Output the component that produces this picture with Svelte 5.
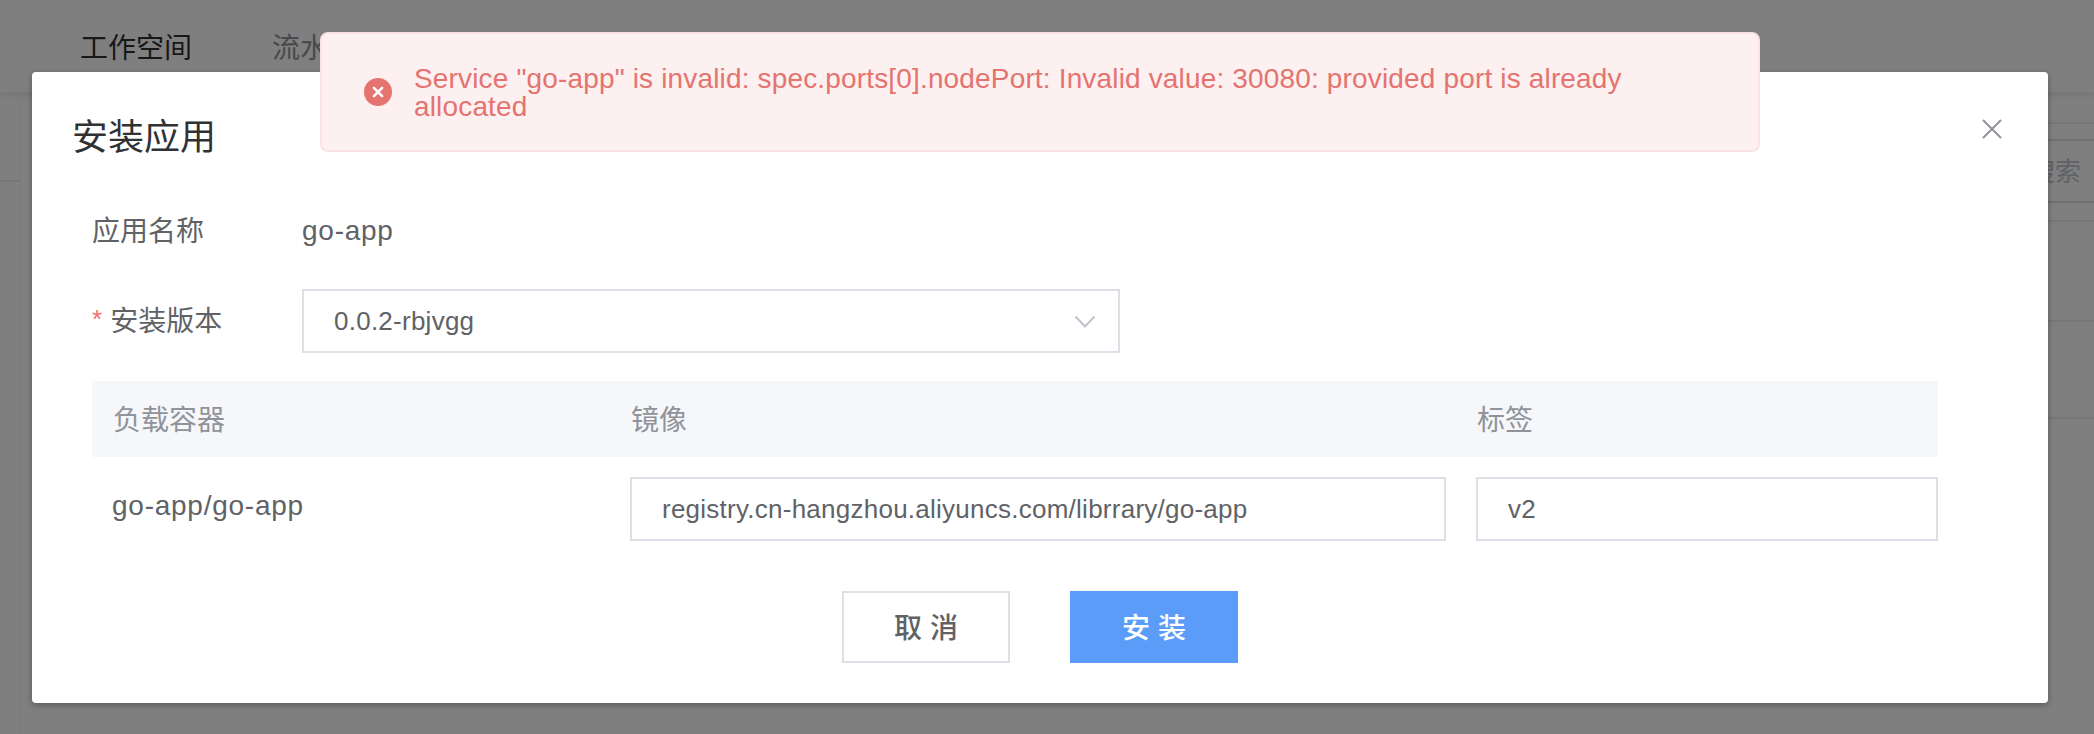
<script>
  const columns = ['负载容器', '镜像', '标签'];
  const rows = [
    { workload: 'go-app/go-app', image: 'registry.cn-hangzhou.aliyuncs.com/librrary/go-app', tag: 'v2' }
  ];
</script>

<div class="screen">
  <div class="page">
    <header class="nav">
      <span class="tab active">工作空间</span>
      <span class="tab">流水</span>
    </header>
    <div class="body">
      <aside class="side"><div class="side-head"></div></aside>
      <main class="main">
        <div class="gap-line"></div>
        <div class="toolbar"><div class="search">搜索</div></div>
        <div class="row first"></div>
        <div class="row second"></div>
      </main>
    </div>
  </div>

  <div class="overlay">
    <section class="dialog">
      <div class="head">
        <h1>安装应用</h1>
        <svg class="close" width="22" height="22" viewBox="0 0 22 22"><path d="M2 2L20 20M20 2L2 20" /></svg>
      </div>
      <div class="form-row name">
        <span class="label">应用名称</span>
        <span class="value">go-app</span>
      </div>
      <div class="form-row version">
        <span class="label"><i>*</i>安装版本</span>
        <div class="field select">
          <span>0.0.2-rbjvgg</span>
          <svg width="22" height="14" viewBox="0 0 22 14"><path d="M1.5 1.5L11 11.5L20.5 1.5" /></svg>
        </div>
      </div>
      <div class="grid thead">
        {#each columns as c}<span>{c}</span>{/each}
      </div>
      {#each rows as r}
        <div class="grid trow">
          <span class="workload">{r.workload}</span>
          <div class="field image"><span>{r.image}</span></div>
          <div class="field"><span>{r.tag}</span></div>
        </div>
      {/each}
      <div class="actions">
        <button>取 消</button>
        <button class="primary">安 装</button>
      </div>
    </section>
  </div>

  <div class="toast">
    <svg width="28" height="28" viewBox="0 0 28 28">
      <circle cx="14" cy="14" r="14" />
      <path d="M9.9 9.9L18.1 18.1M18.1 9.9L9.9 18.1" />
    </svg>
    <p>Service "go-app" is invalid: spec.ports[0].nodePort: Invalid value: 30080: provided port is already<br />allocated</p>
  </div>
</div>

<style>
  :global(body) { margin: 0; }
  .screen, .screen * { box-sizing: border-box; }
  .screen {
    position: relative;
    width: 2094px;
    height: 734px;
    overflow: hidden;
    background: #fff;
    color: #606266;
    font-family: "Liberation Sans", "Noto Sans CJK SC", sans-serif;
    font-size: 28px;
  }
  .page { height: 734px; display: flex; flex-direction: column; }
  .nav {
    height: 92px;
    padding: 0 80px;
    display: flex;
    gap: 80px;
    line-height: 97px;
    box-shadow: 0 2px 8px rgba(0, 0, 0, .12);
  }
  .tab { color: #909399; }
  .tab.active { color: #303133; }
  .body { flex: 1; display: flex; }
  .side { width: 21px; border-right: 1px solid #f8f8fa; }
  .side-head { height: 90px; border-bottom: 2px solid #ebeef5; }
  .main { flex: 1; margin-left: 40px; }
  .gap-line { height: 32px; border-bottom: 2px solid #ebeef5; }
  .toolbar { height: 98px; padding-top: 15px; border-bottom: 2px solid #ebeef5; }
  .search {
    height: 64px;
    padding-right: 13px;
    border: solid #dcdfe6;
    border-width: 2px 0;
    line-height: 62px;
    text-align: right;
    font-size: 26px;
    color: #c0c4cc;
  }
  .row { border-bottom: 2px solid #ebeef5; }
  .first { height: 100px; }
  .second { height: 97px; }

  .overlay {
    position: absolute;
    inset: 0;
    padding: 72px 46px 31px 32px;
    background: rgba(0, 0, 0, .5);
  }
  .dialog {
    height: 631px;
    padding: 40px 110px 0 60px;
    background: #fff;
    border-radius: 4px;
    box-shadow: 0 2px 6px rgba(0, 0, 0, .3);
  }
  .head {
    height: 48px;
    margin: 0 -65px 0 -20px;
    display: flex;
    justify-content: space-between;
  }
  h1 { margin: 0; font-size: 36px; line-height: 51px; font-weight: 400; color: #303133; }
  .close { margin: 6px 0 0; fill: none; stroke: #909399; stroke-width: 2; }
  .form-row { display: flex; align-items: center; height: 64px; }
  .name { margin-top: 38px; padding-top: 2px; }
  .version { margin-top: 27px; }
  .label { width: 210px; line-height: 40px; padding-top: 1px; }
  .label i { font-style: normal; color: #f56c6c; margin-right: 8px; font-size: 26px; line-height: 0; vertical-align: 3px; }
  .value, .workload { letter-spacing: .75px; }
  .field {
    height: 64px;
    padding: 0 30px;
    border: 2px solid #dcdfe6;
    display: flex;
    align-items: center;
    font-size: 26px;
    letter-spacing: .25px;
    background: #fff;
  }
  .select { width: 818px; justify-content: space-between; padding-right: 22px; }
  .select svg { fill: none; stroke: #c0c4cc; stroke-width: 2; position: relative; top: 1px; }
  .grid { display: grid; grid-template-columns: 518px 846px 462px; padding-left: 20px; }
  .image { width: 816px; }
  .thead {
    height: 76px;
    margin-top: 28px;
    padding-left: 21px;
    padding-bottom: 2px;
    align-items: center;
    background: #f5f7fa;
    color: #909399;
  }
  .trow { margin-top: 20px; height: 64px; }
  .workload { line-height: 58px; }
  .actions { display: flex; gap: 60px; margin: 50px 0 0 750px; }
  button {
    width: 168px;
    height: 72px;
    padding: 0 0 2px;
    border: 2px solid #dcdfe6;
    background: #fff;
    color: #606266;
    font: 500 28px "Liberation Sans", "Noto Sans CJK SC", sans-serif;
  }
  .primary { border-color: #5a9cf8; background: #5a9cf8; color: #fff; }

  .toast {
    position: absolute;
    left: 320px;
    top: 32px;
    width: 1440px;
    height: 120px;
    padding: 0 42px;
    display: flex;
    align-items: center;
    gap: 22px;
    border: 2px solid #fbe3e3;
    border-radius: 8px;
    background: #fcf0f0;
    color: #e5736f;
  }
  .toast svg { flex: none; }
  circle { fill: #e5736f; }
  .toast path { stroke: #fff; stroke-width: 2.6; stroke-linecap: round; }
  p { margin: 0; padding-top: 2px; line-height: 28px; letter-spacing: .16px; white-space: nowrap; }
</style>
